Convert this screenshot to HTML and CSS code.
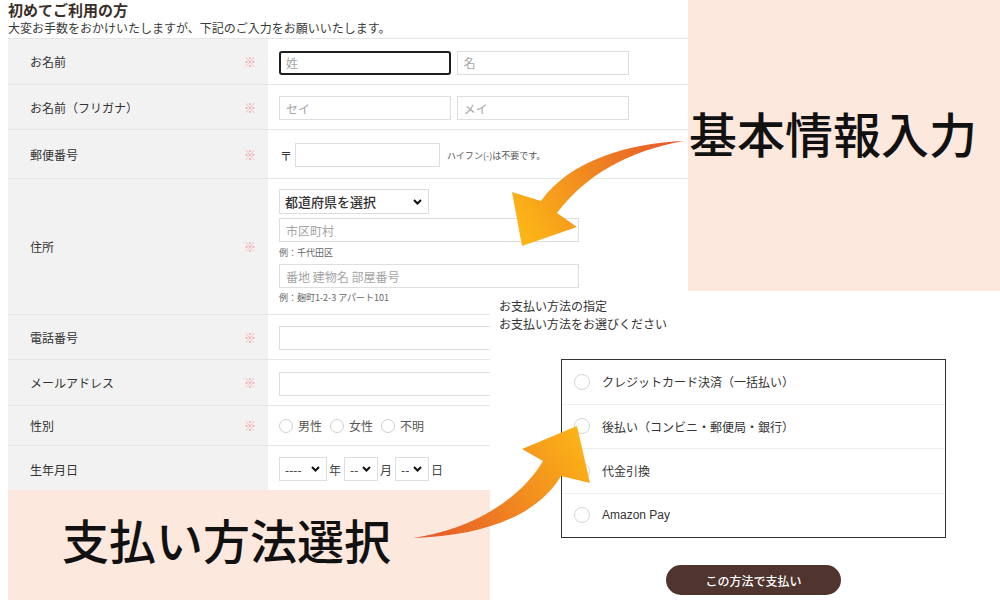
FILE: index.html
```html
<!DOCTYPE html>
<html lang="ja">
<head>
    <meta charset="UTF-8">
    <meta name="viewport" content="width=device-width, initial-scale=1.0">
    <title>基本情報入力・支払い方法選択</title>
    <link rel="stylesheet" href="styles.css">
</head>
<body>
    <div class="canvas">

        <!-- 入力フォーム -->
        <div class="form-shot">
            <h2 class="form-title">初めてご利用の方</h2>
            <p class="form-lead">大変お手数をおかけいたしますが、下記のご入力をお願いいたします。</p>

            <table class="entry">
                <tr class="row-name">
                    <th>お名前<span class="req">※</span></th>
                    <td>
                        <input class="txt half focus" type="text" placeholder="姓">
                        <input class="txt half" type="text" placeholder="名">
                    </td>
                </tr>
                <tr class="row-kana">
                    <th>お名前（フリガナ）<span class="req">※</span></th>
                    <td>
                        <input class="txt half" type="text" placeholder="セイ">
                        <input class="txt half" type="text" placeholder="メイ">
                    </td>
                </tr>
                <tr class="row-zip">
                    <th>郵便番号<span class="req">※</span></th>
                    <td>
                        <span class="zip-mark">〒</span><input class="txt zip" type="text"><span class="note">ハイフン(-)は不要です。</span>
                    </td>
                </tr>
                <tr class="row-addr">
                    <th>住所<span class="req">※</span></th>
                    <td>
                        <div class="addr">
                            <select class="sel pref">
                                <option>都道府県を選択</option>
                            </select>
                            <input class="txt wide" type="text" placeholder="市区町村">
                            <span class="eg">例：千代田区</span>
                            <input class="txt wide" type="text" placeholder="番地 建物名 部屋番号">
                            <span class="eg eg-last">例：麹町1-2-3 アパート101</span>
                        </div>
                    </td>
                </tr>
                <tr class="row-tel">
                    <th>電話番号<span class="req">※</span></th>
                    <td><input class="txt wide" type="text"></td>
                </tr>
                <tr class="row-mail">
                    <th>メールアドレス<span class="req">※</span></th>
                    <td><input class="txt wide" type="text"></td>
                </tr>
                <tr class="row-sex">
                    <th>性別<span class="req">※</span></th>
                    <td>
                        <div class="choices">
                            <span class="dot"></span><span class="choice">男性</span>
                            <span class="dot"></span><span class="choice">女性</span>
                            <span class="dot"></span><span class="choice">不明</span>
                        </div>
                    </td>
                </tr>
                <tr class="row-birth">
                    <th>生年月日</th>
                    <td>
                        <div class="birth">
                            <select class="sel year"><option>----</option></select><span>年</span>
                            <select class="sel day"><option>--</option></select><span>月</span>
                            <select class="sel day"><option>--</option></select><span>日</span>
                        </div>
                    </td>
                </tr>
            </table>
        </div>

        <!-- 見出しパネル -->
        <div class="promo promo-top">基本情報入力</div>

        <!-- 支払い方法 -->
        <div class="payment">
            <p class="pay-head">お支払い方法の指定</p>
            <p class="pay-head">お支払い方法をお選びください</p>

            <ul class="pay-list">
                <li><span class="dot big"></span>クレジットカード決済（一括払い）</li>
                <li><span class="dot big"></span>後払い（コンビニ・郵便局・銀行）</li>
                <li><span class="dot big"></span>代金引換</li>
                <li><span class="dot big"></span>Amazon Pay</li>
            </ul>

            <button class="pay-btn" type="button">この方法で支払い</button>
        </div>

        <div class="promo promo-bottom">支払い方法選択</div>

        <!-- 矢印 -->
        <svg class="arrows" width="1000" height="600" viewBox="0 0 1000 600">
            <defs>
                <linearGradient id="g1" gradientUnits="userSpaceOnUse" x1="684" y1="141" x2="530" y2="240">
                    <stop offset="0" stop-color="#e4552a"/>
                    <stop offset="1" stop-color="#fcb417"/>
                </linearGradient>
                <linearGradient id="g2" gradientUnits="userSpaceOnUse" x1="413" y1="538" x2="580" y2="430">
                    <stop offset="0" stop-color="#e4552a"/>
                    <stop offset="1" stop-color="#fcb417"/>
                </linearGradient>
            </defs>
            <path fill="url(#g1)" d="M684 141 C630 143 570 160 541 201 L512 192 L522 246 L577 227 L557 213 C585 176 627 151 684 141 Z"/>
            <path fill="url(#g2)" d="M413 538 C470 530 520 500 543 461 L522 449 L577 426 L590 483 L561 476 C540 512 490 536 413 538 Z"/>
        </svg>
    </div>
</body>
</html>
```

FILE: styles.css
```css
body {
    margin: 0;
    background-color: #fff;
    font-family: "Noto Sans CJK JP", "Noto Sans", sans-serif;
    color: #333;
}

.canvas {
    position: relative;
    width: 1000px;
    height: 600px;
    overflow: hidden;
    display: grid;
    grid-template-columns: 8px 482px 198px 312px;
    grid-template-rows: 291px 199px 110px;
}

/* ---- フォーム ---- */

.form-shot {
    grid-column: 2 / 4;
    grid-row: 1 / 4;
    overflow: hidden;
}

.form-title {
    margin: 0;
    font-size: 15px;
    line-height: 19px;
    font-weight: bold;
    color: #3b2e28;
}

.form-lead {
    margin: 0 0 1px;
    font-size: 12px;
    line-height: 18px;
    color: #3a3a3a;
}

.entry {
    width: 680px;
    border-collapse: collapse;
    border-top: 1px solid #e6e6e6;
}

.entry tr {
    border-bottom: 1px solid #e6e6e6;
}

.entry th {
    width: 226px;
    padding: 0 12px 0 22px;
    background-color: #f2f2f2;
    text-align: left;
    font-weight: normal;
    font-size: 12px;
    color: #333;
    vertical-align: middle;
}

.entry td {
    padding: 0 0 0 11px;
    vertical-align: middle;
    white-space: nowrap;
}

.req {
    float: right;
    color: #f2a0a0;
    font-size: 12px;
}

.row-name td { height: 45px; }
.row-kana td { height: 44px; }
.row-zip td { height: 48px; }
.row-tel td { height: 44px; }
.row-mail td { height: 45px; }
.row-sex td { height: 39px; }
.row-birth td { height: 46px; }

.txt {
    box-sizing: border-box;
    height: 24px;
    padding: 0 6px;
    border: 1px solid #dedede;
    border-radius: 0;
    font-family: inherit;
    font-size: 12px;
    color: #333;
    outline: none;
    vertical-align: middle;
}

.txt::placeholder {
    color: #a5a5a5;
}

.half {
    width: 172px;
    margin-right: 2px;
}

.focus {
    border: 2px solid #1e1e1e;
    border-radius: 3px;
    padding: 0 5px;
}

.zip-mark {
    font-size: 12px;
    margin: 0 3px 0 1px;
    vertical-align: middle;
}

.zip {
    width: 145px;
}

.note {
    margin-left: 7px;
    font-size: 9px;
    color: #555;
    vertical-align: middle;
}

.addr {
    display: flex;
    flex-direction: column;
    align-items: flex-start;
    padding: 10px 0 7px;
}

.wide {
    width: 300px;
}

.addr .wide {
    margin-top: 4px;
}

.addr .eg + .wide {
    margin-top: 0;
}

.eg {
    font-size: 9px;
    line-height: 22px;
    color: #666;
}

.eg-last {
    line-height: 19px;
}

.sel {
    appearance: none;
    -webkit-appearance: none;
    box-sizing: border-box;
    height: 24px;
    padding: 0 0 0 5px;
    border: 1px solid #dedede;
    border-radius: 0;
    background: #fff url("data:image/svg+xml,%3Csvg xmlns='http://www.w3.org/2000/svg' width='9' height='6'%3E%3Cpath d='M1 1l3.5 3.5L8 1' fill='none' stroke='%23111' stroke-width='2'/%3E%3C/svg%3E") no-repeat right 6px center;
    font-family: inherit;
    font-size: 12px;
    color: #333;
}

.pref {
    width: 150px;
    height: 25px;
    font-size: 13px;
    font-weight: 500;
}

.choices,
.birth {
    display: flex;
    align-items: center;
    font-size: 12px;
    color: #555;
}

.dot {
    box-sizing: border-box;
    width: 14px;
    height: 14px;
    border: 1px solid #cfcfcf;
    border-radius: 50%;
    background-color: #fff;
    flex-shrink: 0;
}

.choice {
    margin: 0 8px 0 5px;
}

.birth .year {
    width: 48px;
}

.birth .day {
    width: 34px;
}

.birth span {
    margin: 0 2px 0 2px;
    color: #444;
}

.birth span + .sel {
    margin-left: 1px;
}

/* ---- 見出しパネル ---- */

.promo {
    background-color: #fde8de;
    color: #111;
    font-weight: 500;
    white-space: nowrap;
}

.promo-top {
    grid-column: 4;
    grid-row: 1;
    font-size: 48px;
    line-height: 48px;
    padding: 108px 0 0 1px;
}

.promo-bottom {
    grid-column: 2;
    grid-row: 3;
    z-index: 2;
    font-size: 47px;
    line-height: 47px;
    padding: 25px 0 0 54px;
}

/* ---- 支払い方法 ---- */

.payment {
    grid-column: 3 / 5;
    grid-row: 2 / 4;
    z-index: 1;
    background-color: #fff;
    padding: 6px 0 0 9px;
}

.pay-head {
    margin: 0;
    font-size: 12px;
    line-height: 18px;
    color: #333;
}

.pay-list {
    list-style: none;
    width: 383px;
    margin: 26px 0 0 62px;
    padding: 0;
    border: 1px solid #333;
    font-family: "Liberation Sans", "Noto Sans CJK JP", sans-serif;
    font-size: 12px;
    color: #333;
}

.pay-list li {
    display: flex;
    align-items: center;
    gap: 12px;
    height: 43.5px;
    padding-left: 12px;
    border-top: 1px solid #eee;
}

.pay-list li:first-child {
    border-top: none;
}

.dot.big {
    width: 16px;
    height: 16px;
    border-color: #d6d6d6;
}

.pay-btn {
    display: block;
    width: 175px;
    height: 30px;
    margin: 27px 0 0 167px;
    border: none;
    border-radius: 15px;
    background-color: #50352f;
    color: #fff;
    font-family: inherit;
    font-size: 12px;
    font-weight: 500;
}

/* ---- 矢印 ---- */

.arrows {
    position: absolute;
    top: 0;
    left: 0;
    z-index: 3;
    pointer-events: none;
}
```
